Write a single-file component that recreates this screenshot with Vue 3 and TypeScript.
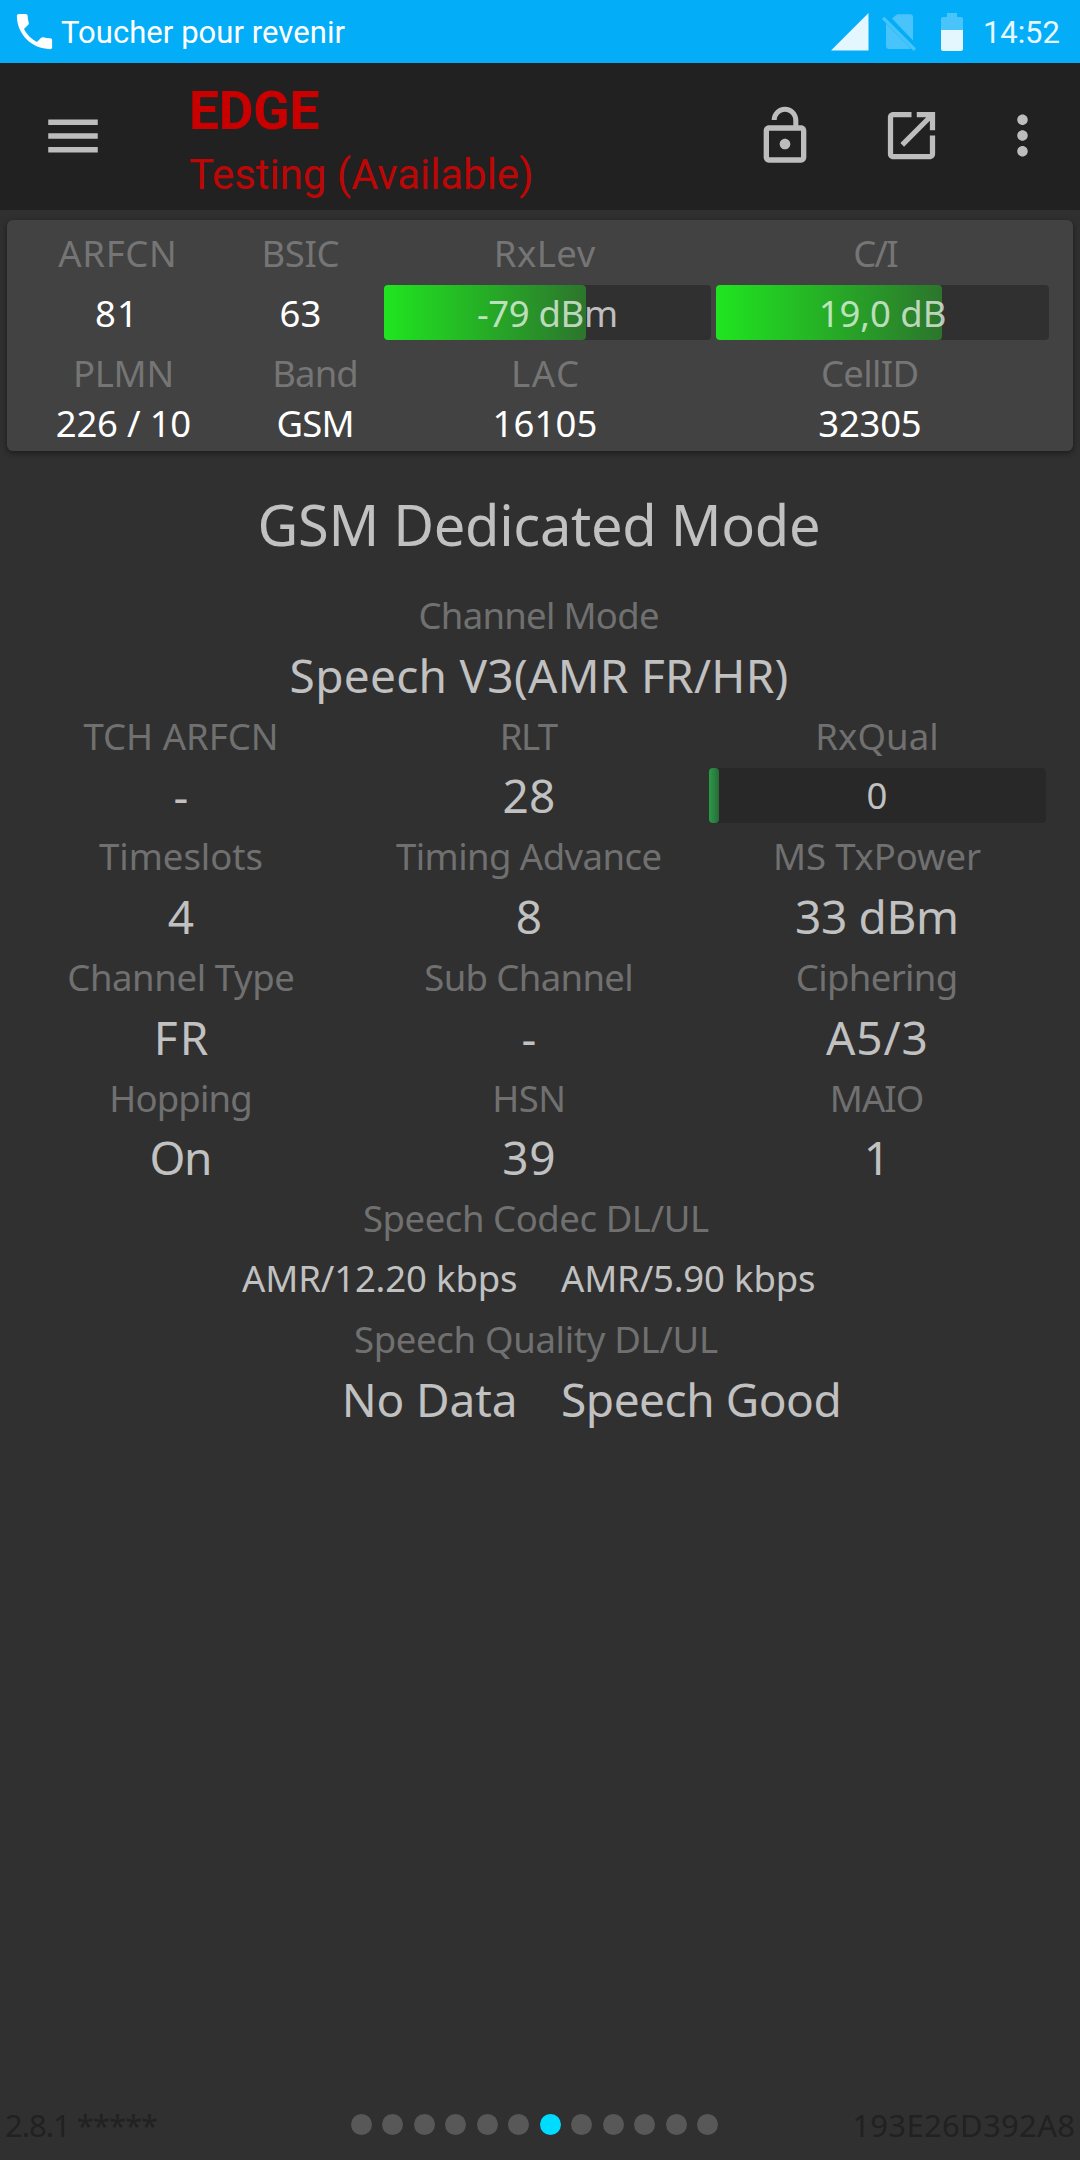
<script setup lang="ts">
import type { Directive } from 'vue'

interface Item {
  text: string
  /** drawn width of the text in px; letter spacing is tuned to reach it */
  w?: number
}

const t = (text: string, w?: number): Item => ({ text, w })

// Tunes letter spacing so that the drawn text spans the requested width.
const ctx = document.createElement('canvas').getContext('2d')!
const vFit: Directive<HTMLElement, number | undefined> = {
  mounted(el, { value }) {
    const text = el.textContent ?? ''
    if (!value || text.length < 2) return
    const cs = getComputedStyle(el)
    ctx.font = `${cs.fontWeight} ${cs.fontSize} ${cs.fontFamily}`
    const m = ctx.measureText(text)
    const ink = m.actualBoundingBoxLeft + m.actualBoundingBoxRight
    const gap = (value - ink) / (text.length - 1)
    el.style.letterSpacing = `${gap}px`
    el.style.marginRight = `${-gap}px`
  },
}

const serving = {
  labels1: [t('ARFCN', 116), t('BSIC', 74), t('RxLev', 99), t('C/I', 42)],
  arfcn: t('81', 34),
  bsic: t('63', 38),
  rxLev: { ...t('-79 dBm', 138), fill: 61.8 },
  ci: { ...t('19,0 dB', 123), fill: 67.9 },
  labels2: [t('PLMN', 95.5), t('Band', 81), t('LAC', 64), t('CellID', 94.5)],
  values2: [t('226 / 10', 133.5), t('GSM', 73), t('16105', 100), t('32305', 100.5)],
}

interface Cell {
  label: Item
  value: Item
  bar?: number
}

const rows: Cell[][] = [
  [
    { label: t('TCH ARFCN', 192.5), value: t('-') },
    { label: t('RLT', 55), value: t('28', 49.5) },
    { label: t('RxQual', 118), value: t('0'), bar: 3 },
  ],
  [
    { label: t('Timeslots', 162.5), value: t('4') },
    { label: t('Timing Advance', 264.5), value: t('8') },
    { label: t('MS TxPower', 205), value: t('33 dBm', 159) },
  ],
  [
    { label: t('Channel Type', 224), value: t('FR', 50) },
    { label: t('Sub Channel', 206), value: t('-') },
    { label: t('Ciphering', 158), value: t('A5/3', 99.5) },
  ],
  [
    { label: t('Hopping', 138), value: t('On', 57.5) },
    { label: t('HSN', 68), value: t('39', 49) },
    { label: t('MAIO', 90), value: t('1') },
  ],
]

const pages = 12
const activePage = 7
</script>

<template>
  <div class="screen">
    <div class="status">
      <svg class="call" viewBox="0 0 24 24"><path d="M20 15.5c-1.25 0-2.45-.2-3.57-.57-.35-.11-.74-.03-1.02.24l-2.2 2.2c-2.83-1.44-5.15-3.75-6.59-6.59l2.2-2.21c.28-.26.36-.65.25-1C8.7 6.45 8.5 5.25 8.5 4c0-.55-.45-1-1-1H4c-.55 0-1 .45-1 1 0 9.39 7.61 17 17 17 .55 0 1-.45 1-1v-3.5c0-.55-.45-1-1-1z" /></svg>
      <span v-fit="284.500" class="status-text">Toucher pour revenir</span>
      <svg class="signal" viewBox="0 0 38 38"><path d="M0 37.5L37.500 0V37.500z" /></svg>
      <svg class="nosim" viewBox="0 0 34 38">
        <path d="M10 4.500L14.200 1Q15 .3 16 .3H28Q31 .3 31 3.300V26.500z" />
        <path d="M4 9.500L29 34.500Q28.600 35 27.500 35H7Q4 35 4 32z" />
        <path d="M0 5L2.300 2.700 34 34.500 31.700 37z" />
      </svg>
      <svg class="battery" viewBox="0 0 22 38">
        <path class="dim" d="M6 0h10v4h4q2 0 2 2v11H0V6q0-2 2-2h4z" />
        <path d="M0 17h22v19q0 2-2 2H2q-2 0-2-2z" />
      </svg>
      <span v-fit="74.500" class="clock">14:52</span>
    </div>

    <header class="toolbar">
      <svg class="menu" viewBox="0 0 24 24"><path d="M3 18h18v-2H3v2zm0-5h18v-2H3v2zm0-7v2h18V6H3z" /></svg>
      <div class="titles">
        <div class="net"><span v-fit="126.500">EDGE</span></div>
        <div class="state"><span v-fit="341">Testing (Available)</span></div>
      </div>
      <svg class="lock" viewBox="0 0 24 24"><path d="M12 17c1.100 0 2-.9 2-2s-.9-2-2-2-2 .9-2 2 .9 2 2 2zm6-9h-1V6c0-2.760-2.240-5-5-5S7 3.240 7 6h1.900c0-1.710 1.390-3.100 3.100-3.100 1.710 0 3.100 1.390 3.100 3.100v2H6c-1.100 0-2 .9-2 2v10c0 1.100.9 2 2 2h12c1.100 0 2-.9 2-2V10c0-1.100-.9-2-2-2zm0 12H6V10h12v10z" /></svg>
      <svg class="open" viewBox="0 0 24 24"><path d="M19 19H5V5h7V3H5c-1.110 0-2 .9-2 2v14c0 1.100.89 2 2 2h14c1.100 0 2-.9 2-2v-7h-2v7zM14 3v2h3.590l-9.830 9.830 1.410 1.410L19 6.410V10h2V3h-7z" /></svg>
      <svg class="more" viewBox="0 0 24 24"><path d="M12 8c1.100 0 2-.9 2-2s-.9-2-2-2-2 .9-2 2 .9 2 2 2zm0 2c-1.100 0-2 .9-2 2s.9 2 2 2 2-.9 2-2-.9-2-2-2zm0 6c-1.100 0-2 .9-2 2s.9 2 2 2 2-.9 2-2-.9-2-2-2z" /></svg>
    </header>

    <section class="card">
      <div class="card-row labels first">
        <div v-for="l in serving.labels1" :key="l.text" class="cell"><span v-fit="l.w">{{ l.text }}</span></div>
      </div>
      <div class="card-row bars">
        <div class="cell"><span v-fit="serving.arfcn.w">{{ serving.arfcn.text }}</span></div>
        <div class="cell"><span v-fit="serving.bsic.w">{{ serving.bsic.text }}</span></div>
        <div v-for="b in [serving.rxLev, serving.ci]" :key="b.text" class="bar">
          <div class="fill" :style="{ width: b.fill + '%' }"></div>
          <span v-fit="b.w">{{ b.text }}</span>
        </div>
      </div>
      <div class="card-row labels second">
        <div v-for="l in serving.labels2" :key="l.text" class="cell"><span v-fit="l.w">{{ l.text }}</span></div>
      </div>
      <div class="card-row second last">
        <div v-for="v in serving.values2" :key="v.text" class="cell"><span v-fit="v.w">{{ v.text }}</span></div>
      </div>
    </section>

    <main class="body">
      <h1><span v-fit="557.500">GSM Dedicated Mode</span></h1>
      <div class="group">
        <div class="label"><span v-fit="237.500">Channel Mode</span></div>
        <div class="value"><span v-fit="495">Speech V3(AMR FR/HR)</span></div>
      </div>
      <div v-for="(row, i) in rows" :key="i" class="row">
        <div v-for="c in row" :key="c.label.text" class="col">
          <div class="label"><span v-fit="c.label.w">{{ c.label.text }}</span></div>
          <div v-if="c.bar" class="value">
            <div class="bar quality">
              <div class="fill" :style="{ width: c.bar + '%' }"></div>
              <span>{{ c.value.text }}</span>
            </div>
          </div>
          <div v-else class="value"><span v-fit="c.value.w">{{ c.value.text }}</span></div>
        </div>
      </div>
      <div class="group shifted">
        <div class="label"><span v-fit="345">Speech Codec DL/UL</span></div>
        <div class="value pair small">
          <div><span v-fit="274">AMR/12.20 kbps</span></div>
          <div><span v-fit="253">AMR/5.90 kbps</span></div>
        </div>
      </div>
      <div class="group shifted">
        <div class="label"><span v-fit="363">Speech Quality DL/UL</span></div>
        <div class="value pair">
          <div><span v-fit="169">No Data</span></div>
          <div><span v-fit="275.500">Speech Good</span></div>
        </div>
      </div>
    </main>

    <footer class="footer">
      <div class="side"><span v-fit="151">2.8.1 *****</span></div>
      <div class="dots">
        <i v-for="n in pages" :key="n" :class="{ on: n === activePage }"></i>
      </div>
      <div class="side right"><span v-fit="220">193E26D392A8</span></div>
    </footer>
  </div>
</template>

<style>
body {
  margin: 0;
  background: #303030;
}
</style>

<style scoped>
.screen {
  width: 1080px;
  height: 2160px;
  display: flex;
  flex-direction: column;
  overflow: hidden;
  background: #303030;
  color: #c1c1c1;
  font-family: 'Noto Sans', 'Open Sans', sans-serif;
  font-size: 36.5px;
  white-space: pre;
}
.screen span {
  display: inline-block;
}
svg {
  display: block;
  flex: none;
  fill: #bdbdbd;
}

.status {
  height: 63px;
  flex: none;
  display: flex;
  align-items: center;
  background: #04adf7;
  font-family: Roboto, sans-serif;
  font-size: 31px;
  line-height: 40px;
  color: #e6f8ff;
}
.status svg {
  fill: #e4f6fe;
}
.status .call {
  width: 47px;
  height: 47px;
  margin-left: 11px;
  fill: #fff;
}
.status-text {
  margin-left: 3px;
  margin-top: 2px;
  color: #fff;
}
.status .signal {
  width: 38px;
  height: 38px;
  margin-left: auto;
}
.status .nosim {
  width: 34px;
  height: 38px;
  margin-left: 13px;
  margin-top: 2px;
  fill: #48c4fa;
}
.status .battery {
  width: 22px;
  height: 38px;
  margin-left: 25px;
}
.battery .dim {
  fill: #48c4fa;
}
.clock {
  width: 117px;
  margin-top: 2px;
  box-sizing: border-box;
  padding-left: 20px;
}

.toolbar {
  height: 147px;
  flex: none;
  box-sizing: border-box;
  padding-bottom: 2px;
  display: flex;
  align-items: center;
  background: #212121;
  font-family: Roboto, sans-serif;
  color: #c80000;
}
.toolbar .menu {
  width: 66px;
  height: 66px;
  margin-left: 40px;
}
.titles {
  margin-left: 83px;
  padding-top: 14px;
  flex: 1;
}
.net {
  font-size: 53.5px;
  font-weight: 700;
  line-height: 64px;
}
.state {
  font-size: 42px;
  line-height: 64px;
  color: #bd0707;
}
.toolbar .lock {
  width: 64px;
  height: 64px;
  margin-right: 63px;
}
.toolbar .open {
  width: 63px;
  height: 63px;
  margin-right: 48px;
}
.toolbar .more {
  width: 63px;
  height: 63px;
  margin-right: 26px;
}

.card {
  flex: none;
  box-sizing: border-box;
  height: 231px;
  margin: 10px 7px 0;
  padding-top: 3px;
  border-radius: 6px;
  background: #424242;
  box-shadow: 0 2px 6px rgba(0, 0, 0, 0.45);
  color: #fff;
}
.card-row {
  display: grid;
  height: 60px;
  line-height: 60px;
  text-align: center;
}
.card-row.first {
  grid-template-columns: 221px 145px 343px 320px;
}
.card-row.second {
  grid-template-columns: 233px 151px 308px 342px;
}
.card-row.bars {
  grid-template-columns: 219px 149px 327px 333px;
  align-items: center;
}
.card-row.bars .bar {
  margin-top: -1px;
  line-height: 57px;
}
.card-row.bars .bar:nth-child(3) {
  margin-left: 9px;
  margin-right: -9px;
}
.card-row.bars .bar:nth-child(4) {
  margin-left: 14px;
  margin-right: -14px;
}
.card-row.last {
  height: 40px;
  line-height: 40px;
}
.card .labels {
  color: #757575;
}
.bar {
  display: grid;
  height: 55px;
  line-height: 55px;
  border-radius: 4px;
  background: #303030;
  text-align: center;
}
.bar > * {
  grid-area: 1 / 1;
}
.bar > .fill {
  height: 55px;
}
.bar > span {
  justify-self: center;
  color: rgba(255, 255, 255, 0.7);
}
.fill {
  border-radius: 4px;
  background: linear-gradient(90deg, #20e520, #2c752c);
}

.body {
  flex: 1;
  padding: 0 29px 0 7px;
  text-align: center;
}
h1 {
  margin: 33px -22px 0 -2px;
  height: 101px;
  line-height: 80px;
  font-size: 56px;
  font-weight: 400;
}
.group:not(.shifted) {
  margin-right: -22px;
  margin-left: -2px;
}
.group.shifted {
  margin-right: -14px;
  margin-left: 0;
}
.row {
  display: grid;
  grid-template-columns: repeat(3, 348px);
}
.label {
  height: 59.7px;
  line-height: 60px;
  color: #707070;
}
.value {
  height: 61px;
  line-height: 61px;
  font-size: 46px;
}
.value .bar {
  width: 337px;
  margin: 0 auto;
  position: relative;
  top: 3px;
  background: #282828;
  font-size: 36.5px;
}
.quality > span {
  color: #c1c1c1;
}
.quality .fill {
  background: linear-gradient(90deg, #289c46, #2a6a39);
}
.pair {
  display: grid;
  grid-template-columns: 510.5px 1fr;
  column-gap: 43.5px;
}
.pair > div:first-child {
  text-align: right;
}
.pair > div:last-child {
  text-align: left;
}
.value.small {
  font-size: 36.5px;
}

.footer {
  height: 70px;
  flex: none;
  display: flex;
  align-items: center;
  justify-content: space-between;
  padding: 0 5px;
  font-size: 31px;
  line-height: 70px;
  color: #212121;
}
.side {
  width: 315px;
}
.right {
  width: 326px;
  text-align: right;
}
.dots {
  display: flex;
  gap: 10.5px;
  padding-bottom: 1px;
}
.dots i {
  width: 21px;
  height: 21px;
  border-radius: 50%;
  background: #585858;
}
.dots .on {
  background: #00dcff;
}
</style>
